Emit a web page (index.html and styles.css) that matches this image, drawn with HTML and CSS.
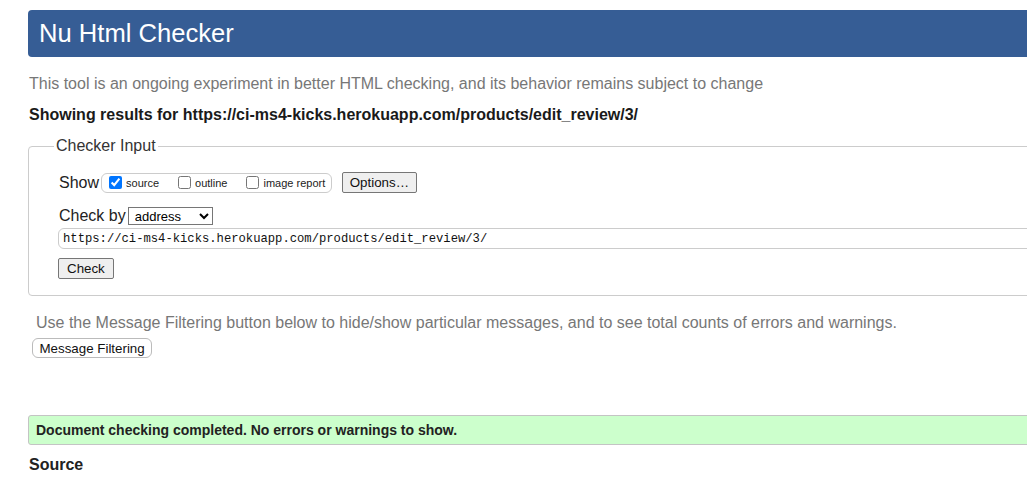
FILE: index.html
```html
<!DOCTYPE html>
<html lang="en">
<head>
  <meta charset="UTF-8" />
  <title>Nu Html Checker</title>
  <link rel="stylesheet" href="styles.css">
</head>
<body>
  <div class="page">
    <h1 class="banner">Nu Html Checker</h1>
    <p class="intro">This tool is an ongoing experiment in better HTML checking, and its behavior remains subject to change</p>
    <p class="results-for">Showing results for https://ci-ms4-kicks.herokuapp.com/products/edit_review/3/</p>

    <form class="checker">
      <fieldset>
        <legend>Checker Input</legend>
        <div class="row show-row">
          <span class="label">Show</span>
          <span class="show-group">
            <label><input type="checkbox" checked> source</label>
            <label><input type="checkbox"> outline</label>
            <label><input type="checkbox"> image report</label>
          </span>
          <button type="button" class="btn">Options…</button>
        </div>
        <div class="row">
          <span class="label">Check by</span>
          <select class="check-by">
            <option>address</option>
          </select>
        </div>
        <input class="url" type="text" value="https://ci-ms4-kicks.herokuapp.com/products/edit_review/3/">
        <div><button type="button" class="btn check-btn">Check</button></div>
      </fieldset>
    </form>

    <p class="filter-note">Use the Message Filtering button below to hide/show particular messages, and to see total counts of errors and warnings.</p>
    <button type="button" class="filter-btn">Message Filtering</button>

    <div class="success">Document checking completed. No errors or warnings to show.</div>
    <h2 class="source">Source</h2>
  </div>
</body>
</html>
```

FILE: styles.css
```css
* {
  box-sizing: border-box;
}
html, body {
  margin: 0;
  padding: 0;
  overflow: hidden;
  background: #fff;
}
body {
  font-family: "Liberation Sans", Arial, sans-serif;
  font-size: 16px;
  color: #222;
}
.page {
  margin-left: 28px;
  width: 1100px;
  padding-top: 10px;
}
.banner {
  margin: 0;
  height: 47px;
  line-height: 47px;
  padding-left: 11px;
  background: #365d95;
  color: #fff;
  font-size: 25.6px;
  font-weight: normal;
  border-radius: 4px;
}
.intro {
  margin: 17px 0 0 1px;
  color: #777;
  line-height: 20px;
}
.results-for {
  margin: 11px 0 0 1px;
  font-weight: bold;
  line-height: 20px;
  color: #1a1a1a;
}
.checker {
  margin-top: 12px;
}
fieldset {
  margin: 0;
  padding: 17px 0 16px 30px;
  border: 1px solid #ccc;
  border-radius: 4px;
}
legend {
  margin-left: -5px;
  padding: 0 2px;
  font-size: 16px;
  color: #333;
}
.row {
  display: flex;
  align-items: center;
  height: 20px;
}
.show-row {
  height: 21px;
  margin-bottom: 13px;
}
.label {
  font-size: 16px;
  margin-right: 2px;
}
.show-group {
  display: inline-flex;
  align-items: center;
  height: 20px;
  border: 1px solid #ccc;
  border-radius: 6px;
  padding: 0 6px 0 7px;
  font-size: 11px;
  margin-right: 10px;
}
.show-group label {
  display: inline-flex;
  align-items: center;
  margin-right: 19px;
}
.show-group label:last-child {
  margin-right: 0;
}
.show-group input {
  width: 13px;
  height: 13px;
  margin: 0 4px 0 0;
  accent-color: #0075ff;
}
.btn {
  font-family: "Liberation Sans", Arial, sans-serif;
  font-size: 13.33px;
  height: 21px;
  padding: 0 6.5px;
  background: #efefef;
  border: 1px solid #767676;
  border-radius: 2px;
  color: #111;
}
.check-btn {
  margin-left: -1px;
  padding: 0 8px;
}
.check-by {
  font-family: "Liberation Sans", Arial, sans-serif;
  font-size: 13px;
  width: 85px;
  height: 18px;
  padding: 0 2px;
  border: 1px solid #767676;
  border-radius: 0;
  background: #fff;
}
.url {
  display: block;
  width: 1060px;
  height: 21px;
  margin: 2px 0 9px -1px;
  padding: 0 4px;
  font-family: "Liberation Mono", "DejaVu Sans Mono", monospace;
  font-size: 12.2px;
  border: 1px solid #ccc;
  border-radius: 6px;
  color: #111;
}
.filter-note {
  margin: 17px 0 0 8px;
  color: #777;
  line-height: 20px;
}
.filter-btn {
  display: block;
  margin: 5px 0 0 4px;
  height: 20px;
  padding: 0 6.5px;
  font-family: "Liberation Sans", Arial, sans-serif;
  font-size: 13.33px;
  background: #fff;
  border: 1px solid #bbb;
  border-radius: 6px;
  color: #111;
}
.success {
  margin-top: 57px;
  height: 30px;
  line-height: 28px;
  padding-left: 7px;
  background: #ccffcc;
  border: 1px solid #c4c4c4;
  border-radius: 3px;
  font-size: 14px;
  font-weight: bold;
}
.source {
  margin: 10px 0 0 1px;
  font-size: 16px;
  line-height: 20px;
}
```
